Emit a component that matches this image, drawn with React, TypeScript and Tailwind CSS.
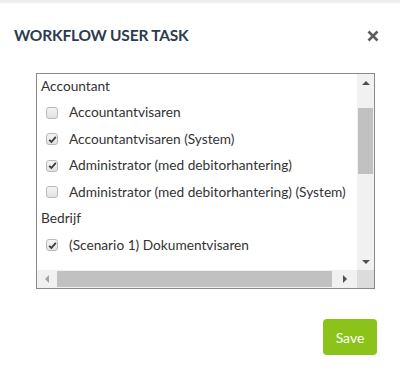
import React from "react";

type Row = { kind: "group"; label: string } | { kind: "item"; label: string; checked: boolean };

const rows: Row[] = [
  { kind: "group", label: "Accountant" },
  { kind: "item", label: "Accountantvisaren", checked: false },
  { kind: "item", label: "Accountantvisaren (System)", checked: true },
  { kind: "item", label: "Administrator (med debitorhantering)", checked: true },
  { kind: "item", label: "Administrator (med debitorhantering) (System)", checked: false },
  { kind: "group", label: "Bedrijf" },
  { kind: "item", label: "(Scenario 1) Dokumentvisaren", checked: true },
];

function Check({ checked }: { checked: boolean }) {
  return (
    <span className="w-[12px] h-[12px] rounded-[3px] border border-[#b9b9b9] bg-[linear-gradient(#f4f4f4,#e2e2e2)] flex items-center justify-center shrink-0">
      {checked && (
        <svg width="9" height="9" viewBox="0 0 9 9">
          <path d="M1.2 4.8 L3.4 7 L7.8 1.8" fill="none" stroke="#3a3a3a" strokeWidth="1.8" />
        </svg>
      )}
    </span>
  );
}

export default function App() {
  return (
    <div className="w-[400px] h-[372px] bg-white border-t-[3px] border-[#eef0ef] font-['Lato',sans-serif] text-[#333]">
      <div className="flex items-center justify-between pl-[14px] pr-[21px] pt-[22px]">
        <h1 className="text-[15.5px] leading-[20px] font-bold text-[#2d3b4e] tracking-[-0.2px]">WORKFLOW USER TASK</h1>
        <svg width="12" height="12" viewBox="0 0 12 12" className="mt-[1px]">
          <path d="M1.5 1.5 L10.5 10.5 M10.5 1.5 L1.5 10.5" stroke="#5e5e5e" strokeWidth="2.6" />
        </svg>
      </div>

      <div className="ml-[36px] mt-[28px] w-[339px] h-[216px] border border-[#8a8a8a] grid grid-cols-[1fr_17px] grid-rows-[1fr_18px]">
        <div className="overflow-hidden">
          <div className="w-[330px] -mt-[1px]">
            {rows.map((r, i) =>
              r.kind === "group" ? (
                <div key={i} className="h-[26.5px] flex items-center pl-[4px] text-[13.7px] whitespace-nowrap">
                  {r.label}
                </div>
              ) : (
                <div key={i} className="h-[26.5px] flex items-center pl-[9px] gap-[11px] text-[13.7px] whitespace-nowrap">
                  <Check checked={r.checked} />
                  <span>{r.label}</span>
                </div>
              )
            )}
          </div>
        </div>
        <div className="bg-[#f1f1f1] flex flex-col items-center">
          <div className="h-[17px] flex items-center justify-center">
            <span className="w-0 h-0 border-l-[4px] border-r-[4px] border-b-[4px] border-l-transparent border-r-transparent border-b-[#505050]" />
          </div>
          <div className="w-[17px] px-[1px] mt-[17px]">
            <div className="h-[66px] bg-[#c1c1c1]" />
          </div>
          <div className="flex-1" />
          <div className="h-[17px] flex items-center justify-center">
            <span className="w-0 h-0 border-l-[4px] border-r-[4px] border-t-[4px] border-l-transparent border-r-transparent border-t-[#505050]" />
          </div>
        </div>
        <div className="bg-[#f1f1f1] flex items-center">
          <div className="w-[20px] flex items-center justify-center">
            <span className="w-0 h-0 border-t-[4px] border-b-[4px] border-r-[4px] border-t-transparent border-b-transparent border-r-[#a3a3a3]" />
          </div>
          <div className="w-[275px] h-[16px] bg-[#c1c1c1]" />
          <div className="flex-1 flex items-center justify-center">
            <span className="w-0 h-0 border-t-[4px] border-b-[4px] border-l-[4px] border-t-transparent border-b-transparent border-l-[#505050]" />
          </div>
        </div>
        <div className="bg-[#dcdcdc]" />
      </div>

      <div className="flex justify-end pr-[23px] mt-[30px]">
        <button className="w-[54px] h-[36px] rounded-[4px] bg-[#8cc31b] text-white text-[14px]">Save</button>
      </div>
    </div>
  );
}
